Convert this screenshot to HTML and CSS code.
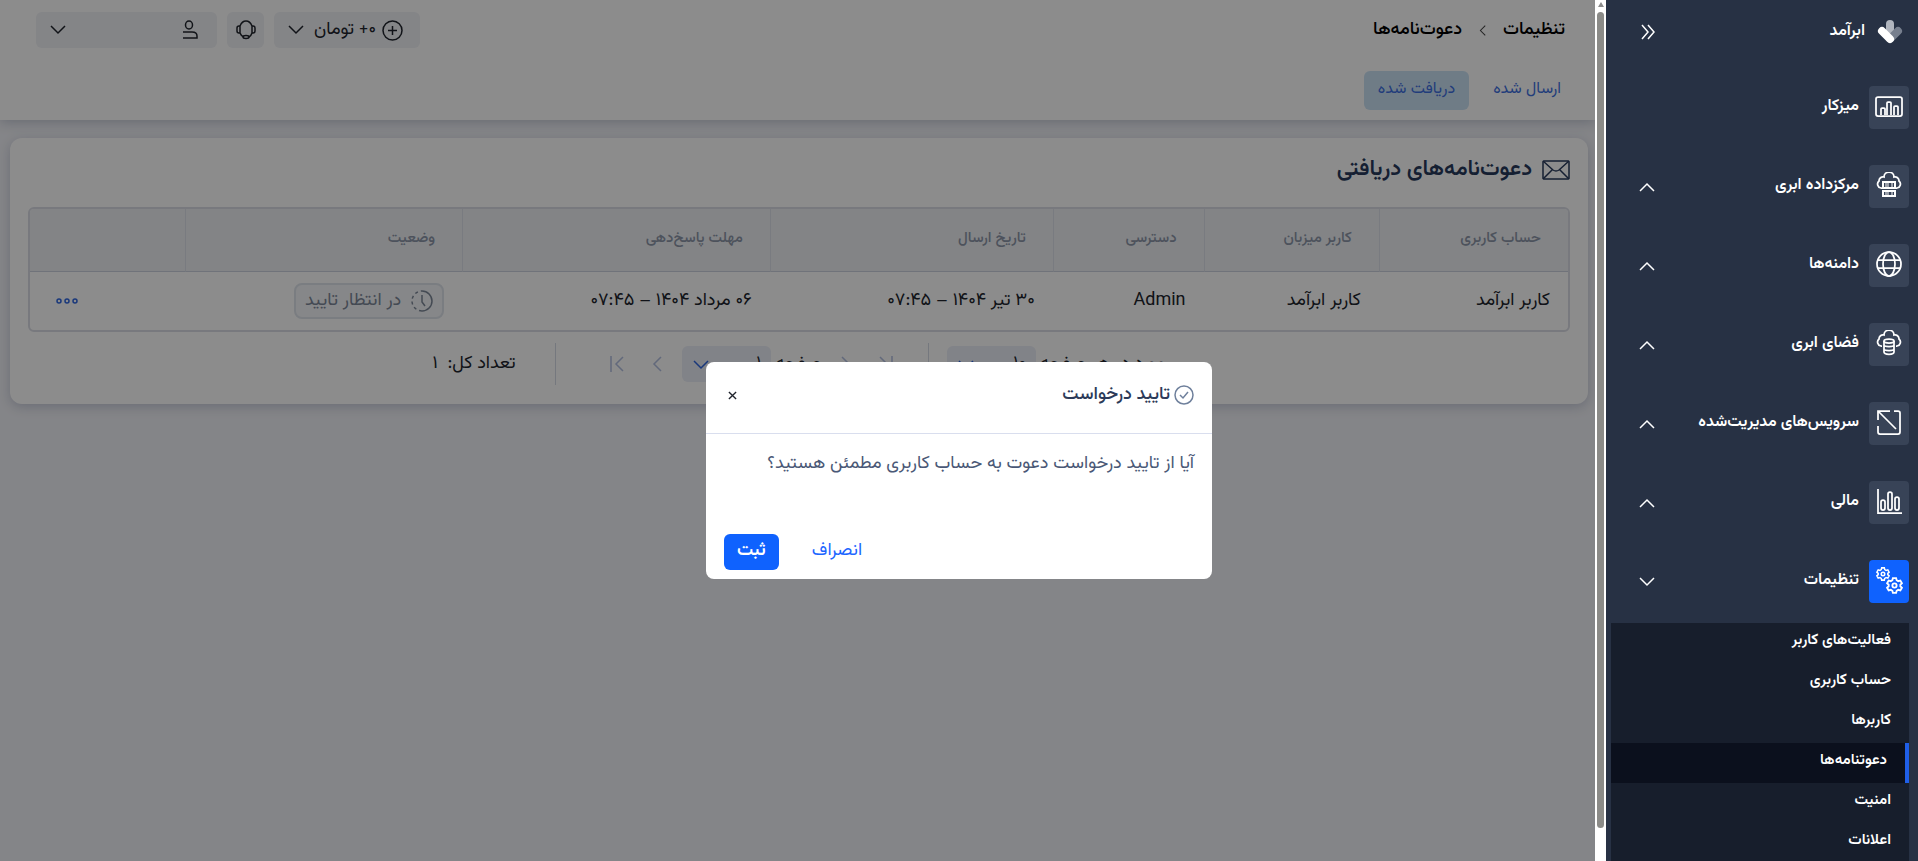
FILE: index.html
```html
<!DOCTYPE html>
<html lang="fa" dir="rtl">

<head>
  <meta charset="UTF-8">
  <meta name="viewport" content="width=device-width, initial-scale=1.0">
  <title>دعوت‌نامه‌ها</title>
  <link rel="stylesheet" href="styles.css">
</head>

<body>
  <!-- shared icons -->
  <svg class="sprite" aria-hidden="true">
    <symbol id="down" viewBox="0 0 16 10"><path d="M1 1l7 7 7-7"/></symbol>
    <symbol id="up" viewBox="0 0 16 10"><path d="M1 9l7-7 7 7"/></symbol>
    <symbol id="left" viewBox="0 0 10 16"><path d="M9 1L2 8l7 7"/></symbol>
    <symbol id="right" viewBox="0 0 10 16"><path d="M1 1l7 7-7 7"/></symbol>
    <symbol id="last" viewBox="0 0 14 16"><path d="M1 0v16M13 1L6 8l7 7"/></symbol>
    <symbol id="first" viewBox="0 0 14 16"><path d="M13 0v16M1 1l7 7-7 7"/></symbol>
    <symbol id="cloud" viewBox="0 0 28 28"><path d="M7 16H6a4 4 0 0 1-2-7 4 4 0 0 1 5-4 5 5 0 0 1 10 0 4 4 0 0 1 5 4 4 4 0 0 1-2 7h-1"/></symbol>
    <symbol id="gear" viewBox="0 0 16 16">
      <path d="M6.500 1h3l.5 2 1.500.9 2-.6 1.500 2.600L13.500 7.300v1.400L15 10.100l-1.500 2.600-2-.6-1.500.9-.5 2h-3l-.5-2-1.500-.9-2 .6L1 10.100l1.500-1.400V7.300L1 5.900l1.500-2.600 2 .6L6 3z"/>
      <circle cx="8" cy="8" r="2"/>
    </symbol>
  </svg>

  <div class="app">
    <aside class="sidebar">
      <div class="brand">
        <svg class="logo" viewBox="0 0 26 26">
          <path d="M13 5v9" stroke="#b0b5be"/>
          <path d="M21 12l-8 8" stroke="#777f8e"/>
          <path d="M5 12l8 8" stroke="#fff"/>
        </svg>
        <span>ابرآمد</span>
        <button class="plain collapse" aria-label="بستن منو">
          <svg class="ico" width="14" height="16" viewBox="0 0 14 16"><path d="M1 1l6 7-6 7M7 1l6 7-6 7"/></svg>
        </button>
      </div>

      <nav class="menu">
        <a class="menu-item" href="#">
          <span class="menu-icon"><svg class="ico" width="28" height="28" viewBox="0 0 28 28"><rect x="1" y="4" width="26" height="19" rx="2"/><path d="M6 22v-6q0-1 1-1h2q1 0 1 1v6M12 22V10q0-1 1-1h2q1 0 1 1v12M19 22v-8q0-1 1-1h2q1 0 1 1v8"/></svg></span>
          <span class="menu-text">میزکار</span>
        </a>
        <a class="menu-item" href="#">
          <span class="menu-icon"><svg class="ico" width="28" height="28" viewBox="0 0 28 28"><use href="#cloud"/><path fill="#fff" stroke="none" fill-rule="evenodd" d="M7 9h14v8H7zM9 11v4h10v-4zM7 18h14v7H7zM9 20v3h10v-3z"/><path stroke-width="1" d="M11 11v4M13 11v4M17 11v4M11 20v3M13 20v3M17 20v3"/></svg></span>
          <span class="menu-text">مرکزداده ابری</span>
          <svg class="ico arrow"><use href="#up"/></svg>
        </a>
        <a class="menu-item" href="#">
          <span class="menu-icon"><svg class="ico" width="28" height="28" viewBox="0 0 28 28"><circle cx="14" cy="13" r="12"/><ellipse cx="14" cy="13" rx="6" ry="12"/><path d="M3 9h22M3 17h22"/></svg></span>
          <span class="menu-text">دامنه‌ها</span>
          <svg class="ico arrow"><use href="#up"/></svg>
        </a>
        <a class="menu-item" href="#">
          <span class="menu-icon"><svg class="ico" width="28" height="28" viewBox="0 0 28 28"><use href="#cloud"/><ellipse cx="14" cy="11" rx="5" ry="2"/><path d="M9 11v11c0 3 10 3 10 0V11M9 15c0 2 10 2 10 0M9 19c0 2 10 2 10 0"/></svg></span>
          <span class="menu-text">فضای ابری</span>
          <svg class="ico arrow"><use href="#up"/></svg>
        </a>
        <a class="menu-item" href="#">
          <span class="menu-icon"><svg class="ico" width="28" height="28" viewBox="0 0 28 28"><path d="M3 11V2h12M4 3l17 17M19 2h4q2 0 2 2v19q0 2-2 2H5q-2 0-2-2v-6"/></svg></span>
          <span class="menu-text">سرویس‌های مدیریت‌شده</span>
          <svg class="ico arrow"><use href="#up"/></svg>
        </a>
        <a class="menu-item" href="#">
          <span class="menu-icon"><svg class="ico" width="28" height="28" viewBox="0 0 28 28"><path d="M3 1v24h24"/><rect x="6" y="12" width="4" height="10" rx="2"/><rect x="13" y="4" width="4" height="18" rx="2"/><rect x="20" y="9" width="4" height="13" rx="2"/></svg></span>
          <span class="menu-text">مالی</span>
          <svg class="ico arrow"><use href="#up"/></svg>
        </a>
        <a class="menu-item" href="#">
          <span class="menu-icon current"><svg class="ico" width="28" height="28" viewBox="0 0 28 28"><use href="#gear" x="1" y="0" width="14" height="14"/><use href="#gear" x="11" y="10" width="17" height="17"/></svg></span>
          <span class="menu-text">تنظیمات</span>
          <svg class="ico arrow"><use href="#down"/></svg>
        </a>
      </nav>

      <nav class="submenu">
        <a href="#">فعالیت‌های کاربر</a>
        <a href="#">حساب کاربری</a>
        <a href="#">کاربرها</a>
        <a class="active" href="#">دعوتنامه‌ها</a>
        <a href="#">امنیت</a>
        <a href="#">اعلانات</a>
      </nav>
    </aside>

    <div class="scrollbar"><span class="scroll-up"></span><span class="thumb"></span></div>

    <main class="main">
      <header class="header">
        <div class="topbar">
          <div class="breadcrumb">
            <a href="#">تنظیمات</a>
            <svg class="ico" width="7" height="11"><use href="#left"/></svg>
            <a href="#">دعوت‌نامه‌ها</a>
          </div>
          <div class="tools">
            <button class="tool balance">
              <svg class="ico" width="21" height="21" viewBox="0 0 21 21"><circle cx="10.500" cy="10.500" r="9.500"/><path d="M10.500 6v9M6 10.500h9"/></svg>
              <span>۰+ تومان</span>
              <svg class="ico arrow"><use href="#down"/></svg>
            </button>
            <button class="tool support" aria-label="پشتیبانی">
              <svg class="ico" width="20" height="20" viewBox="0 0 20 20"><path d="M4 6q2-5 6-5t6 5M4 6v7H3q-2 0-2-2V8q0-2 2-2zM16 6v7h1q2 0 2-2V8q0-2-2-2zM4 13q1 3 4 4M16 13q-1 3-3 4"/><ellipse cx="10" cy="17" rx="3" ry="1.500"/></svg>
            </button>
            <button class="tool account" aria-label="حساب">
              <svg class="ico" width="18" height="20" viewBox="0 0 18 20"><ellipse cx="8" cy="5" rx="3.500" ry="4"/><path d="M2 12h9q5 0 5 4v2H2"/></svg>
              <svg class="ico arrow"><use href="#down"/></svg>
            </button>
          </div>
        </div>
        <div class="tabs">
          <a href="#">ارسال شده</a>
          <a class="active" href="#">دریافت شده</a>
        </div>
      </header>

      <section class="card">
        <h1>
          <svg class="ico" width="28" height="20" viewBox="0 0 28 20"><rect x="1" y="1" width="26" height="18" rx="1"/><path d="M1 1l10 9q3 2 6 0L27 1M1 19l9-9M27 19l-9-9"/></svg>
          دعوت‌نامه‌های دریافتی
        </h1>

        <table class="table">
          <thead>
            <tr>
              <th class="w-account">حساب کاربری</th>
              <th class="w-host">کاربر میزبان</th>
              <th class="w-access">دسترسی</th>
              <th class="w-sent">تاریخ ارسال</th>
              <th class="w-deadline">مهلت پاسخ‌دهی</th>
              <th class="w-status">وضعیت</th>
              <th class="w-more"></th>
            </tr>
          </thead>
          <tbody>
            <tr>
              <td>کاربر ابرآمد</td>
              <td>کاربر ابرآمد</td>
              <td>Admin</td>
              <td>۳۰ تیر ۱۴۰۴ – ۰۷:۴۵</td>
              <td>۰۶ مرداد ۱۴۰۴ – ۰۷:۴۵</td>
              <td>
                <span class="status">
                  <svg class="ico" width="22" height="22" viewBox="0 0 22 22"><path d="M11 1a10 10 0 0 1 0 20"/><path d="M11 21a10 10 0 0 1 0-20" stroke-dasharray="3 3"/><path d="M11 5v7l3 4"/></svg>
                  در انتظار تایید
                </span>
              </td>
              <td class="more">
                <button class="plain" aria-label="بیشتر">
                  <svg class="ico" width="22" height="8" viewBox="0 0 22 8"><circle cx="3" cy="4" r="2"/><circle cx="11" cy="4" r="2"/><circle cx="19" cy="4" r="2"/></svg>
                </button>
              </td>
            </tr>
          </tbody>
        </table>

        <div class="pager">
          <span class="page">
            <label for="size">مورد در هر صفحه</label>
            <span class="select">
              <select id="size"><option>۱۰</option></select>
              <svg class="ico arrow"><use href="#down"/></svg>
            </span>
          </span>
          <i class="line"></i>
          <button class="plain" aria-label="اولین صفحه" disabled><svg class="ico" width="14" height="16"><use href="#first"/></svg></button>
          <button class="plain" aria-label="صفحه قبل" disabled><svg class="ico" width="10" height="16"><use href="#right"/></svg></button>
          <span class="page">
            <label for="page">صفحه</label>
            <span class="select">
              <select id="page"><option>۱</option></select>
              <svg class="ico arrow"><use href="#down"/></svg>
            </span>
          </span>
          <button class="plain" aria-label="صفحه بعد" disabled><svg class="ico" width="10" height="16"><use href="#left"/></svg></button>
          <button class="plain" aria-label="آخرین صفحه" disabled><svg class="ico" width="14" height="16"><use href="#last"/></svg></button>
          <i class="line wide"></i>
          <span>تعداد کل: &nbsp;۱</span>
        </div>
      </section>
    </main>
  </div>

  <div class="overlay">
    <div class="modal" role="dialog" aria-labelledby="modal-title">
      <div class="modal-head">
        <svg class="ico" width="20" height="20" viewBox="0 0 20 20"><circle cx="10" cy="10" r="9"/><path d="M6 10l3 3 5-6"/></svg>
        <h2 id="modal-title">تایید درخواست</h2>
        <button class="plain close" aria-label="بستن">
          <svg class="ico" width="9" height="9" viewBox="0 0 10 10"><path d="M1 1l8 8M9 1L1 9"/></svg>
        </button>
      </div>
      <p class="modal-text">آیا از تایید درخواست دعوت به حساب کاربری مطمئن هستید؟</p>
      <div class="modal-foot">
        <button class="btn">انصراف</button>
        <button class="btn primary">ثبت</button>
      </div>
    </div>
  </div>
</body>

</html>
```
FILE: styles.css
```css
* {
  box-sizing: border-box;
}

body {
  margin: 0;
  font-family: Vazirmatn, "Noto Sans Arabic", "Noto Sans", "DejaVu Sans", sans-serif;
  font-size: 18px;
  line-height: 24px;
  color: #20242c;
  overflow: hidden;
}

a {
  color: inherit;
  text-decoration: none;
}

button,
select {
  font: inherit;
  color: inherit;
  border: 0;
}

.plain {
  display: flex;
  padding: 0;
  background: none;
}

.sprite {
  display: none;
}

.ico {
  flex: none;
  fill: none;
  stroke: currentColor;
  stroke-width: 1.5;
}

.arrow {
  width: 16px;
  height: 10px;
}

.app {
  display: flex;
  height: 100vh;
}

/* sidebar */
.sidebar {
  position: relative;
  z-index: 20;
  flex: none;
  width: 312px;
  padding: 12px 9px 0 5px;
  background: #273144;
  color: #fff;
  font-size: 16px;
  font-weight: 600;
  overflow: hidden;
}

.brand {
  display: flex;
  align-items: center;
  gap: 12px;
  height: 40px;
  padding: 0 6px 0 30px;
}

.logo {
  width: 26px;
  height: 26px;
  fill: none;
  stroke-width: 8;
  stroke-linecap: round;
}

.collapse {
  margin-right: auto;
}

.menu {
  display: grid;
  gap: 36px;
  padding: 34px 0 20px;
}

.menu-item {
  display: flex;
  align-items: center;
  gap: 10px;
  height: 43px;
  padding-left: 28px;
}

.menu-item .arrow {
  margin-right: auto;
}

.menu-text {
  padding-bottom: 2px;
}

.menu-icon {
  display: grid;
  place-items: center;
  width: 40px;
  height: 43px;
  padding-bottom: 2px;
  border-radius: 4px;
  background: #384357;
}

.menu-icon .ico {
  stroke-width: 1.75;
}

.menu-icon.current {
  background: #0f62fe;
}

.submenu {
  background: #171e2c;
  font-size: 15px;
}

.submenu a {
  display: block;
  height: 40px;
  padding: 6px 18px;
}

.submenu .active {
  background: #0b101d;
  border-right: 4px solid #1f5fe8;
}

/* scrollbar */
.scrollbar {
  position: relative;
  z-index: 20;
  display: flex;
  flex-direction: column;
  align-items: center;
  gap: 5px;
  width: 11px;
  padding: 2px 0 33px;
  background: #fff;
}

.scroll-up {
  border: 3px solid transparent;
  border-top: 0;
  border-bottom: 5px solid #8b8b8b;
}

.thumb {
  flex: 1;
  width: 7px;
  border-radius: 4px;
  background: #8b8b88;
}

/* page */
.main {
  flex: 1;
  background: #f1f2f7;
}

.header {
  height: 120px;
  padding: 12px 30px 0 36px;
  background: #fff;
  box-shadow: 0 2px 12px #bcc1cf;
}

.topbar,
.breadcrumb,
.tools,
.tool,
.tabs {
  display: flex;
  align-items: center;
}

.topbar {
  justify-content: space-between;
}

.breadcrumb {
  gap: 17px;
  color: #000;
  font-weight: 500;
}

.breadcrumb .ico {
  color: #444;
}

.tools {
  gap: 10px;
}

.tool {
  height: 36px;
  border-radius: 6px;
  background: #f0f2f6;
}

.balance {
  gap: 6px;
  padding: 0 17px 0 14px;
}

.balance .arrow {
  margin-right: 4px;
}

.support {
  justify-content: center;
  width: 37px;
  padding: 0;
}

.account {
  justify-content: space-between;
  width: 181px;
  padding: 0 18px 0 14px;
}

.tabs {
  gap: 10px;
  margin: 23px -10px 0 0;
  color: #3d6fe0;
  font-size: 16px;
}

.tabs a {
  height: 39px;
  padding: 7px 14px;
  border-radius: 6px;
}

.tabs .active {
  background: #cbe2f5;
}

.card {
  margin: 18px 7px 0 10px;
  padding: 14px 18px 19px;
  border-radius: 12px;
  background: #fff;
  box-shadow: 0 3px 12px #c3c7d6;
}

.card h1 {
  display: flex;
  align-items: center;
  gap: 10px;
  height: 36px;
  margin: 0 0 19px;
  color: #273a5c;
  font-size: 22px;
  font-weight: 600;
}

.table {
  width: 100%;
  table-layout: fixed;
  border: 2px solid #dadde5;
  border-radius: 6px;
  border-spacing: 0;
  text-align: right;
  overflow: hidden;
}

.table th {
  height: 63px;
  padding: 0 27px 2px;
  border-bottom: 1px solid #cdd2de;
  border-left: 1px solid #dde1ea;
  background: #eef0f5;
  color: #8c96a8;
  font-size: 15px;
  font-weight: 500;
}

.table th:last-child {
  border-left: 0;
}

.table td {
  height: 58px;
  padding: 0 18px;
}

.w-account { width: 12.3%; }
.w-host { width: 11.4%; }
.w-access { width: 9.8%; }
.w-sent { width: 18.4%; }
.w-deadline { width: 20%; }
.w-status { width: 18%; }

.status {
  display: inline-flex;
  align-items: center;
  gap: 10px;
  height: 36px;
  padding: 0 9px;
  border: 2px solid #dfe4ec;
  border-radius: 8px;
  background: #f4f6f9;
  color: #7c8798;
}

.more .plain {
  margin: 0 auto 0 8px;
  color: #2f66e0;
}

.pager {
  display: flex;
  align-items: center;
  justify-content: center;
  gap: 12px;
  height: 42px;
  margin-top: 11px;
}

.pager .plain {
  padding: 0 8px;
  color: #b3bfe0;
}

.pager .line {
  width: 1px;
  height: 42px;
  margin: 0 6px 0 15px;
  background: #d5dae6;
}

.pager .wide {
  margin: 0 34px 0 28px;
}

.page {
  display: flex;
  align-items: center;
  gap: 4px;
}

.select {
  position: relative;
}

.select select {
  width: 89px;
  height: 36px;
  padding: 0 10px;
  border-radius: 6px;
  background: #ebeef7;
  appearance: none;
}

.select .arrow {
  position: absolute;
  left: 11px;
  top: 14px;
  color: #2f66e0;
  pointer-events: none;
}

/* modal */
.overlay {
  position: fixed;
  inset: 0;
  z-index: 10;
  display: flex;
  align-items: flex-start;
  justify-content: center;
  padding-top: 42vh;
  background: rgba(0, 0, 0, 0.45);
}

.modal {
  width: 506px;
  border-radius: 8px;
  background: #fff;
}

.modal-head {
  display: flex;
  align-items: center;
  gap: 4px;
  height: 72px;
  padding: 0 18px 4px 22px;
  border-bottom: 1px solid #d9deee;
  color: #6f809c;
}

.modal-head h2 {
  margin: 0;
  color: #2c3a58;
  font-size: 18px;
  font-weight: 500;
}

.close {
  margin-right: auto;
  color: #20242c;
}

.modal-text {
  margin: 0;
  padding: 18px 18px 58px;
  color: #4a5876;
}

.modal-foot {
  display: flex;
  justify-content: flex-end;
  gap: 20px;
  padding: 0 18px 9px;
}

.btn {
  height: 36px;
  padding: 0 13px 2px;
  border-radius: 6px;
  background: none;
  color: #1c66ff;
}

.btn.primary {
  background: #0f62fe;
  color: #fff;
  font-weight: 600;
}
```
